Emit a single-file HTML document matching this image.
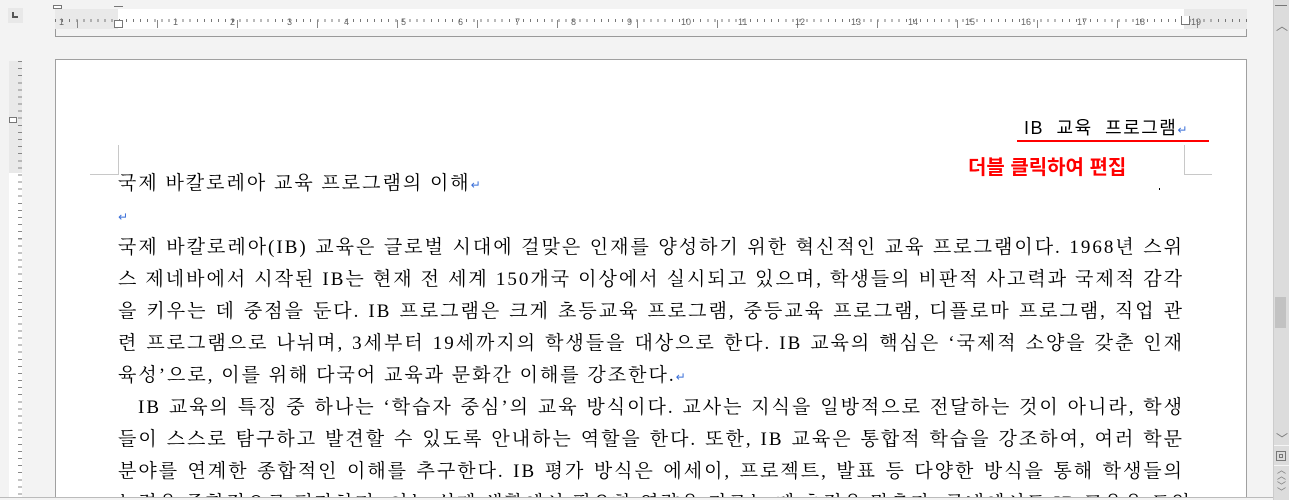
<!DOCTYPE html>
<html style="overflow:hidden;width:1289px;height:500px"><head><meta charset="utf-8"><style>
*{margin:0;padding:0;box-sizing:border-box}
body{width:1289px;height:500px;overflow:hidden;background:#f3f3f3;position:relative;font-family:"Liberation Serif","Noto Serif CJK SC",serif;}
.abs{position:absolute}
#page{left:55px;top:59px;width:1192px;height:441px;background:#fff;border:1px solid #a0a0a0;border-bottom:none}
.ruler{left:55px;top:9px;width:1192px;height:20px;background:#fff}
.ticks{left:55px;top:19px;width:1192px;height:3px;background:repeating-linear-gradient(90deg,#777 0 1px,transparent 1px 7.09px)}
.num{position:absolute;top:8px;font:9px "Liberation Sans",sans-serif;color:#666}
.line{position:absolute;left:118px;width:1066px;font-size:19px;line-height:32.2px;height:32.2px;white-space:nowrap;text-align:justify;text-align-last:justify;color:#000;letter-spacing:2px}
.line.l{text-align-last:left}
.ret{color:#3a6fd8;font-family:"DejaVu Sans",sans-serif;font-size:12px;letter-spacing:0}
</style></head><body>
<div class="abs ruler"></div>
<div class="abs" style="left:55px;top:9px;width:63px;height:20px;background:#e9e9e9"></div>
<div class="abs" style="left:1184px;top:9px;width:63px;height:20px;background:#e9e9e9"></div>
<div class="abs ticks"></div>
<div class="abs" style="left:55px;top:20px;width:1192px;height:8px;background:repeating-linear-gradient(90deg,#888 0 1px,transparent 1px 80px);background-position:22px 0;"></div>
<div class="abs" style="left:55px;top:9px;width:1192px;height:20px">
<span class="num" style="left:4px">1</span>
<span class="num" style="left:118px">1</span><span class="num" style="left:175px">2</span><span class="num" style="left:232px">3</span><span class="num" style="left:289px">4</span><span class="num" style="left:346px">5</span><span class="num" style="left:403px">6</span><span class="num" style="left:460px">7</span><span class="num" style="left:516px">8</span><span class="num" style="left:572px">9</span><span class="num" style="left:626px">10</span><span class="num" style="left:683px">11</span><span class="num" style="left:740px">12</span><span class="num" style="left:796px">13</span><span class="num" style="left:853px">14</span><span class="num" style="left:910px">15</span><span class="num" style="left:966px">16</span><span class="num" style="left:1022px">17</span><span class="num" style="left:1080px">18</span><span class="num" style="left:1136px">19</span>
</div>
<div class="abs" style="left:55px;top:29px;width:1192px;height:8px;border:1px solid #999;border-top:none"></div>
<div class="abs" style="left:53px;top:5px;width:9px;height:4px;border:1px solid #777;background:#fff"></div>
<div class="abs" style="left:114px;top:6px;width:9px;height:22px;border:1px solid #777;border-left:none;border-right:none"></div>
<div class="abs" style="left:114px;top:20px;width:9px;height:8px;border:1px solid #777;background:#fff"></div>
<div class="abs" style="left:1181px;top:16px;width:9px;height:9px;border:1px solid #777;border-top:none;background:#fff"></div>
<div class="abs" style="left:8px;top:8px;width:15px;height:15px;background:#e8e8e8"></div>
<div class="abs" style="left:12px;top:12px;width:6px;height:6px;border-left:2px solid #555;border-bottom:2px solid #555"></div>
<div class="abs" style="left:9px;top:61px;width:13px;height:439px;background:#fff"></div>
<div class="abs" style="left:9px;top:61px;width:13px;height:112px;background:#e9e9e9"></div>
<div class="abs" style="left:18px;top:61px;width:4px;height:439px;background:repeating-linear-gradient(180deg,#888 0 1px,transparent 1px 7.09px)"></div>
<div class="abs" style="left:9px;top:117px;width:8px;height:6px;border:1px solid #777;background:#fff"></div>
<div class="abs" id="page"></div>
<div class="abs" style="left:118px;top:145px;width:1px;height:30px;background:#c8c8c8"></div>
<div class="abs" style="left:90px;top:174px;width:28px;height:1px;background:#c8c8c8"></div>
<div class="abs" style="left:1184px;top:145px;width:1px;height:30px;background:#c8c8c8"></div>
<div class="abs" style="left:1184px;top:174px;width:28px;height:1px;background:#c8c8c8"></div>
<div class="abs" style="left:1024px;top:114px;font:18px 'Liberation Sans','Noto Sans CJK KR',sans-serif;letter-spacing:1.5px;word-spacing:6px;color:#000">IB 교육 프로그램<span class="ret">↵</span></div>
<div class="abs" style="left:1017px;top:140px;width:192px;height:2px;background:#f00"></div>
<div class="abs" style="left:968px;top:151px;font:bold 20px 'Liberation Sans','Noto Sans CJK KR',sans-serif;color:#f00">더블 클릭하여 편집</div>
<div class="abs" style="left:1159px;top:188px;width:1px;height:2px;background:#000"></div>

<div class="line l" style="top:168px">국제 바칼로레아 교육 프로그램의 이해<span class="ret">↵</span></div>
<div class="line l" style="top:200px"><span class="ret">↵</span></div>
<div class="line" style="top:232px">국제 바칼로레아(IB) 교육은 글로벌 시대에 걸맞은 인재를 양성하기 위한 혁신적인 교육 프로그램이다. 1968년 스위</div>
<div class="line" style="top:264px">스 제네바에서 시작된 IB는 현재 전 세계 150개국 이상에서 실시되고 있으며, 학생들의 비판적 사고력과 국제적 감각</div>
<div class="line" style="top:296px">을 키우는 데 중점을 둔다. IB 프로그램은 크게 초등교육 프로그램, 중등교육 프로그램, 디플로마 프로그램, 직업 관</div>
<div class="line" style="top:328px">련 프로그램으로 나뉘며, 3세부터 19세까지의 학생들을 대상으로 한다. IB 교육의 핵심은 ‘국제적 소양을 갖춘 인재</div>
<div class="line l" style="top:360px">육성’으로, 이를 위해 다국어 교육과 문화간 이해를 강조한다.<span class="ret">↵</span></div>
<div class="line" style="top:392px;left:138px;width:1046px">IB 교육의 특징 중 하나는 ‘학습자 중심’의 교육 방식이다. 교사는 지식을 일방적으로 전달하는 것이 아니라, 학생</div>
<div class="line" style="top:424px">들이 스스로 탐구하고 발견할 수 있도록 안내하는 역할을 한다. 또한, IB 교육은 통합적 학습을 강조하여, 여러 학문</div>
<div class="line" style="top:456px">분야를 연계한 종합적인 이해를 추구한다. IB 평가 방식은 에세이, 프로젝트, 발표 등 다양한 방식을 통해 학생들의</div>
<div class="line" style="top:488px">능력을 종합적으로 평가하며, 이는 실제 생활에서 필요한 역량을 기르는 데 초점을 맞춘다. 국내에서도 IB 교육을 도입</div>
<div class="abs" style="left:0;top:497px;width:1273px;height:3px;background:#f3f3f3;border-top:1px solid #bbb"></div>
<div class="abs" style="left:1273px;top:0;width:16px;height:500px;background:#dcdcdc;border-left:1px solid #ccc"></div>
<div class="abs" style="left:1275px;top:5px;width:12px;height:1px;background:#777"></div>
<div class="abs" style="left:1276px;top:17px;font:12px 'DejaVu Sans';color:#777">︿</div>
<div class="abs" style="left:1275px;top:297px;width:11px;height:31px;background:#c2c2c2"></div>
<div class="abs" style="left:1276px;top:430px;font:12px 'DejaVu Sans';color:#777">﹀</div>
<div class="abs" style="left:1274px;top:445px;width:15px;height:1px;background:#f5f5f5"></div>
<div class="abs" style="left:1276px;top:451px;width:10px;height:10px;border:1px solid #777"></div>
<div class="abs" style="left:1279px;top:454px;width:4px;height:4px;border:1px solid #777"></div>
<div class="abs" style="left:1274px;top:465px;width:15px;height:1px;background:#f5f5f5"></div>
<div class="abs" style="left:1277px;top:468px;font:9px 'DejaVu Sans';color:#777;line-height:6px">︿<br>︿</div>
<div class="abs" style="left:1277px;top:484px;font:9px 'DejaVu Sans';color:#777;line-height:6px">﹀<br>﹀</div>
</body></html>
